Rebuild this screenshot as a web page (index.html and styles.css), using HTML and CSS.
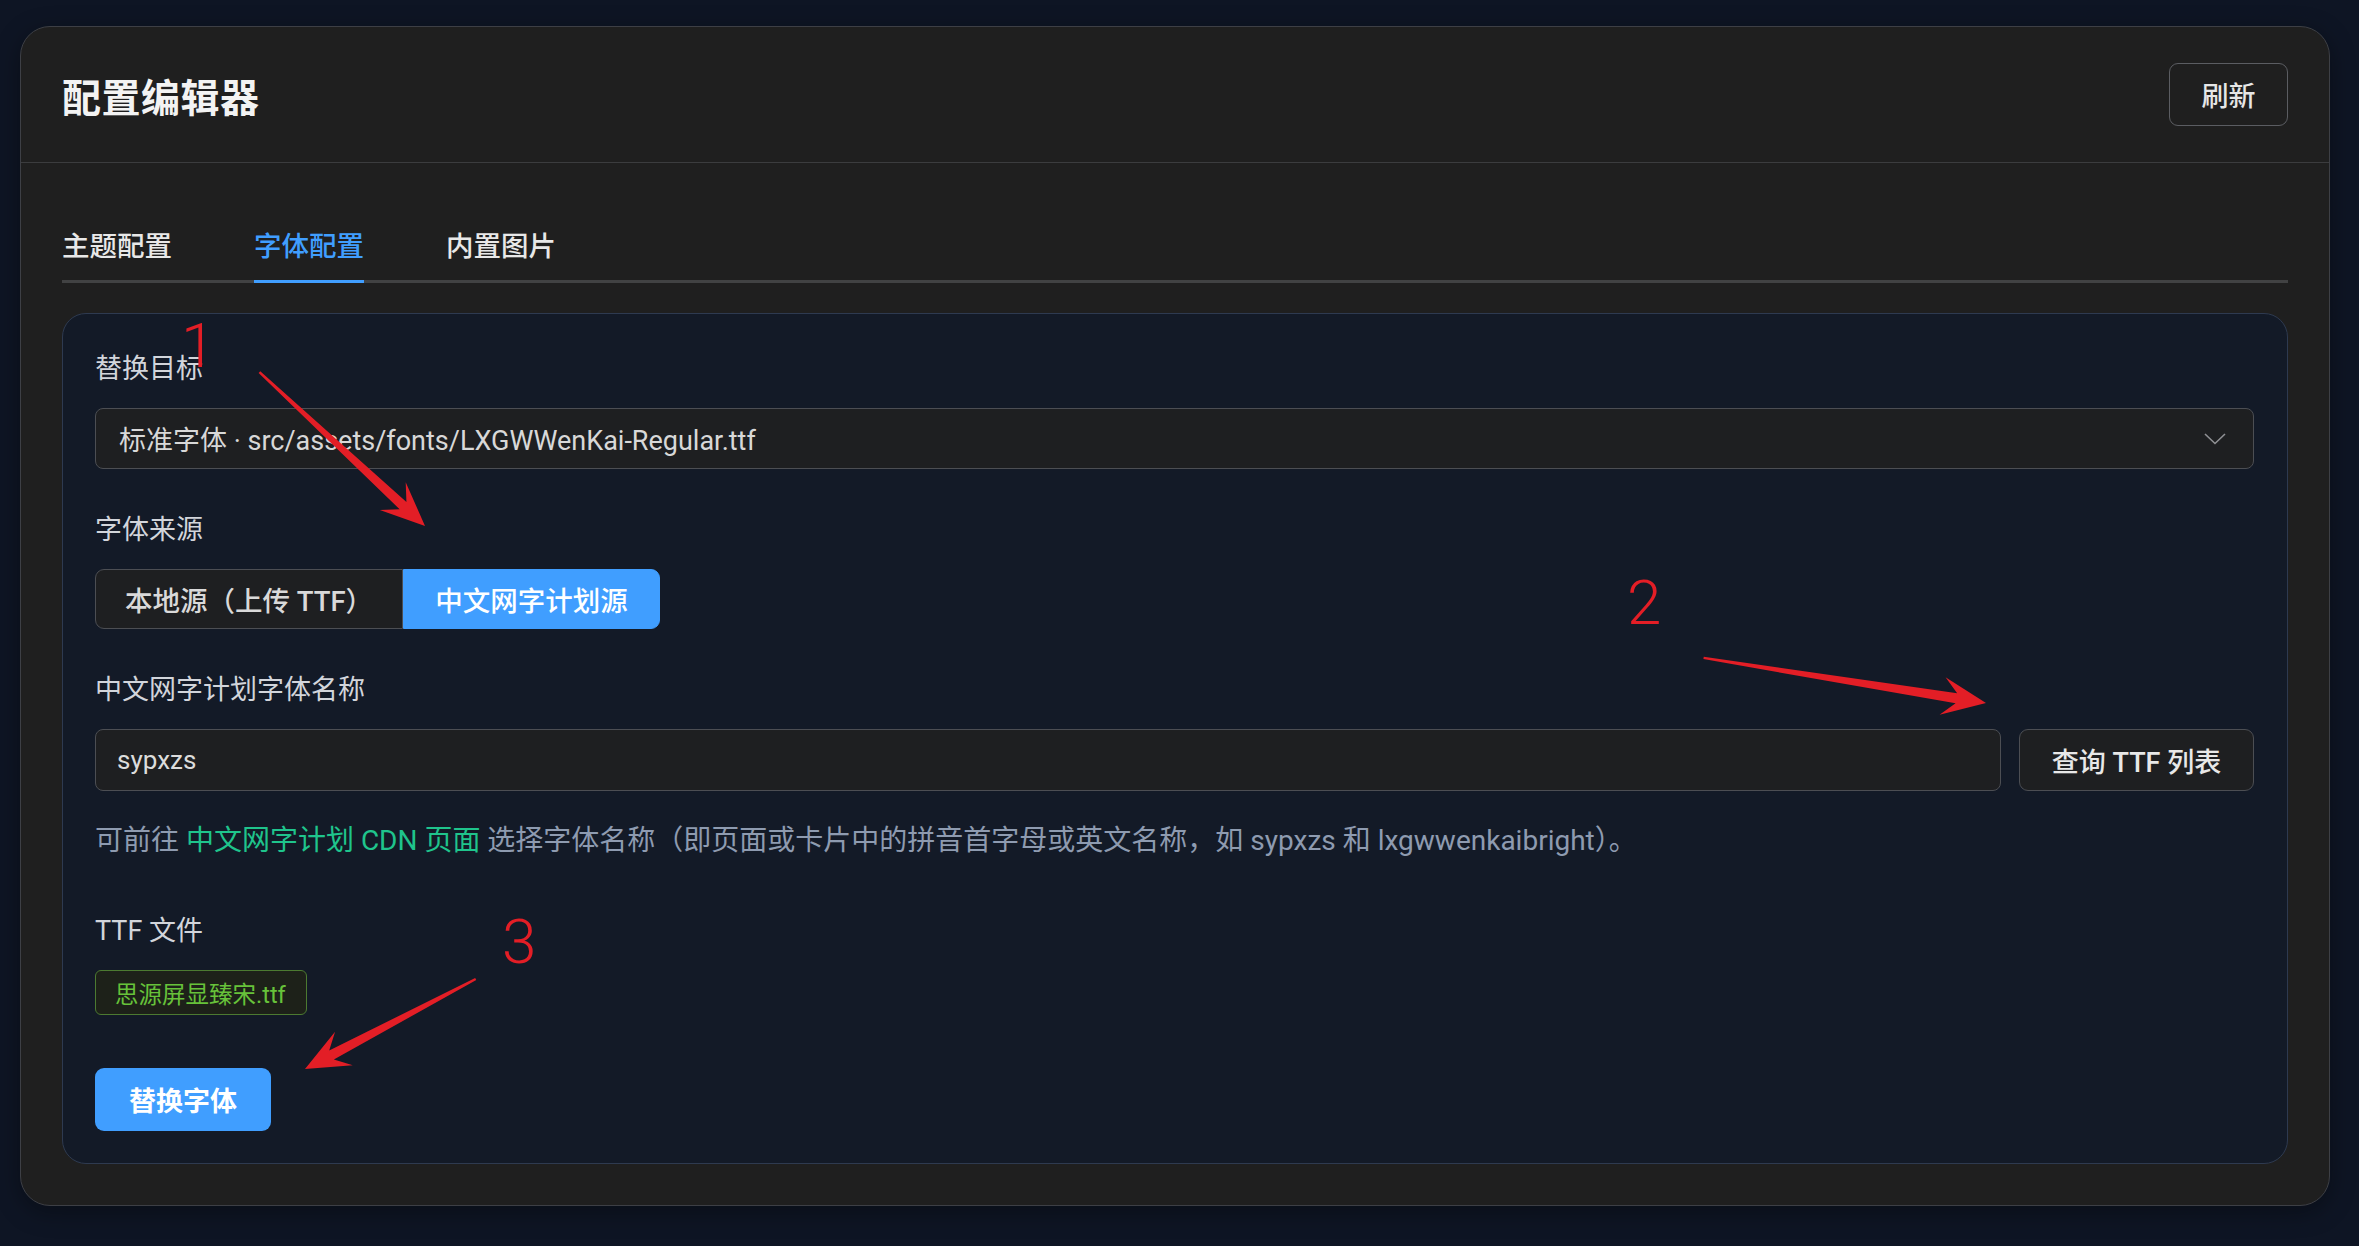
FILE: index.html
```html
<!DOCTYPE html>
<html lang="zh-CN">
<head>
<meta charset="utf-8">
<title>配置编辑器</title>
<link rel="stylesheet" href="styles.css">
</head>
<body>
<div class="card">
  <header class="card-header">
    <h1 class="title">配置编辑器</h1>
    <button class="btn btn-outline">刷新</button>
  </header>
  <div class="card-body">
    <nav class="tabs">
      <div class="tab">主题配置</div>
      <div class="tab active">字体配置</div>
      <div class="tab">内置图片</div>
    </nav>
    <section class="panel">
      <div class="label">替换目标</div>
      <div class="select">
        <span class="select-text">标准字体 · src/assets/fonts/LXGWWenKai-Regular.ttf</span>
        <svg class="chevron" width="22" height="12" viewBox="0 0 22 12"><path d="M1 1 L11 10.5 L21 1" fill="none" stroke="#8f9094" stroke-width="1.6"/></svg>
      </div>

      <div class="label gap-top">字体来源</div>
      <div class="radio-group">
        <div class="radio-btn">本地源（上传 TTF）</div>
        <div class="radio-btn checked">中文网字计划源</div>
      </div>

      <div class="label gap-top">中文网字计划字体名称</div>
      <div class="input-row">
        <div class="input">sypxzs</div>
        <button class="btn btn-query">查询 TTF 列表</button>
      </div>
      <p class="help">可前往 <span class="link">中文网字计划 CDN 页面</span> 选择字体名称（即页面或卡片中的拼音首字母或英文名称，如 sypxzs 和 lxgwwenkaibright）。</p>

      <div class="label gap-top-lg">TTF 文件</div>
      <div class="tag">思源屏显臻宋.ttf</div>

      <button class="btn btn-primary">替换字体</button>
    </section>
  </div>
</div>

<svg class="annot" width="2359" height="1246" viewBox="0 0 2359 1246">
  <g transform="translate(425 526) rotate(42.9)"><polygon points="-226,-1.2 -30,-5 -44,-19 0,0 -44,19 -30,5 -226,1.2" fill="#e31e26"/></g>
  <g transform="translate(1986 703) rotate(9.07)"><polygon points="-286,-1.2 -30,-5 -44,-19 0,0 -44,19 -30,5 -286,1.2" fill="#e31e26"/></g>
  <g transform="translate(305 1069) rotate(152.2)"><polygon points="-193,-1.2 -30,-5 -44,-19 0,0 -44,19 -30,5 -193,1.2" fill="#e31e26"/></g>
</svg>
<span class="mark mark-1">1</span>
<span class="mark mark-2">2</span>
<span class="mark mark-3">3</span>
</body>
</html>
```

FILE: styles.css
```css
* { box-sizing: border-box; }

html, body {
  margin: 0;
  padding: 0;
}

body {
  width: 2359px;
  height: 1246px;
  overflow: hidden;
  position: relative;
  background: #0e1524;
  font-family: Roboto, "Noto Sans CJK SC", sans-serif;
  color: #d3d6dc;
  padding: 26px 29px 0 20px;
}

.card {
  width: 2310px;
  background: #1f1f1f;
  border: 1px solid #3d3f45;
  border-radius: 30px;
  box-shadow: 0 6px 24px rgba(0, 0, 0, 0.35);
}

.card-header {
  height: 136px;
  padding: 0 41px;
  display: flex;
  align-items: center;
  justify-content: space-between;
  border-bottom: 1px solid #3b3c3e;
}

.title {
  margin: 0;
  font-size: 39px;
  font-weight: 700;
  color: #f3f3f3;
  letter-spacing: 0.5px;
}

.btn {
  font-family: Roboto, "Noto Sans CJK SC", sans-serif;
  font-size: 27px;
  font-weight: 500;
  cursor: pointer;
  border-radius: 9px;
}

.btn-outline {
  width: 119px;
  height: 63px;
  background: transparent;
  border: 1px solid #5b5d62;
  color: #e6e6e6;
}

.card-body {
  padding: 0 41px 41px;
}

.tabs {
  margin-top: 64px;
  display: flex;
  gap: 82px;
  border-bottom: 3px solid #414243;
}

.tab {
  font-size: 27.5px;
  font-weight: 500;
  line-height: 40px;
  padding-bottom: 13px;
  margin-bottom: -3px;
  border-bottom: 3px solid transparent;
  color: #e8e8e8;
}

.tab.active {
  color: #409eff;
  border-bottom-color: #409eff;
}

.panel {
  margin-top: 30px;
  background: #131a27;
  border: 1px solid #2e3a50;
  border-radius: 24px;
  padding: 35px 33px 32px 32px;
}

.label {
  font-size: 27px;
  line-height: 40px;
  color: #d2d5db;
  margin-bottom: 19px;
}

.gap-top { margin-top: 41px; }
.gap-top-lg { margin-top: 50px; }

.select {
  height: 61px;
  background: #1e1f21;
  border: 1px solid #4c4e53;
  border-radius: 8px;
  display: flex;
  align-items: center;
  justify-content: space-between;
  padding: 0 27px 0 23px;
}

.select-text {
  font-size: 27px;
  color: #d8d8d8;
}

.chevron { display: block; }

.radio-group {
  display: flex;
  height: 60px;
}

.radio-btn {
  display: flex;
  align-items: center;
  justify-content: center;
  font-size: 27.5px;
  font-weight: 500;
  padding: 0 28px;
  color: #d9d9d9;
  background: #1e1f21;
  border: 1px solid #4c4e53;
  border-radius: 9px 0 0 9px;
  width: 308px;
}

.radio-btn.checked {
  width: 257px;
  background: #409eff;
  border-color: #409eff;
  color: #ffffff;
  border-radius: 0 9px 9px 0;
}

.input-row {
  display: flex;
  gap: 18px;
  height: 62px;
}

.input {
  flex: 1;
  display: flex;
  align-items: center;
  padding: 0 21px;
  font-size: 26px;
  color: #dcdcdc;
  background: #1e1f21;
  border: 1px solid #4c4e53;
  border-radius: 8px;
}

.btn-query {
  width: 235px;
  height: 62px;
  background: #1e1f21;
  border: 1px solid #4c4e53;
  color: #e8e8e8;
}

.help {
  margin: 30px 0 0;
  font-size: 28px;
  line-height: 40px;
  color: #8e9bb0;
}

.link {
  color: #1fc48c;
}

.tag {
  display: inline-flex;
  align-items: center;
  height: 45px;
  padding: 0 20px 0 19px;
  font-size: 23.5px;
  color: #67c23a;
  background: #1d2119;
  border: 1px solid #4c7a31;
  border-radius: 6px;
}

.btn-primary {
  display: block;
  margin-top: 53px;
  width: 176px;
  height: 63px;
  background: #409eff;
  border: none;
  color: #ffffff;
  font-weight: 600;
}

.annot {
  position: absolute;
  left: 0;
  top: 0;
  pointer-events: none;
}

.mark {
  position: absolute;
  font-family: Roboto, "Noto Sans", sans-serif;
  font-weight: 300;
  font-size: 62px;
  line-height: 1;
  color: #e31e26;
}

.mark-1 { left: 181px; top: 315px; }
.mark-2 { left: 1627px; top: 572px; }
.mark-3 { left: 502px; top: 911px; }
```
